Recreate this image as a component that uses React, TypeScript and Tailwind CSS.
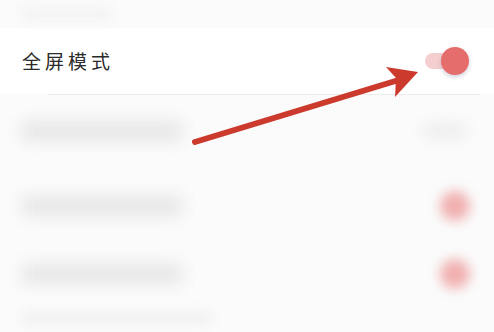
import React from "react";

function BlurRow({ pink, h }: { pink?: boolean; h: string }) {
  return (
    <div className={`flex items-center justify-between pl-[22px] pr-[24px] ${h}`}>
      <div className="h-[20px] w-[160px] rounded bg-[#e6e6e6] blur-[8px]" />
      {pink ? (
        <div className="h-[30px] w-[30px] rounded-full bg-[#f1b0b0] blur-[6px]" />
      ) : (
        <div className="mr-[4px] h-[16px] w-[42px] rounded bg-[#eeeeee] blur-[7px]" />
      )}
    </div>
  );
}

export default function App() {
  return (
    <div className="relative h-[332px] w-[494px] overflow-hidden bg-[#fbfbfb] font-['Noto_Sans_CJK_SC',sans-serif]">
      <div className="flex h-[28px] items-center pl-[22px]">
        <div className="h-[10px] w-[90px] rounded bg-[#f1f1f1] blur-[6px]" />
      </div>
      <div className="flex h-[66px] items-center justify-between bg-white pl-[22px] pr-[25px]">
        <span className="text-[19px] tracking-[4px] text-[#2a2a2a]">全屏模式</span>
        <div className="relative flex h-[30px] w-[44px] items-center">
          <div className="h-[16px] w-[34px] rounded-full bg-[#f5cfcf]" />
          <div className="absolute right-0 top-[1px] h-[28px] w-[28px] rounded-full bg-[#e56d6b] shadow-[0_2px_4px_rgba(120,120,160,0.35)]" />
        </div>
      </div>
      <div className="ml-[48px] mr-[14px] h-px bg-[#ececec]" />
      <div className="flex flex-col">
        <BlurRow h="h-[72px]" />
        <BlurRow h="h-[78px]" pink />
        <BlurRow h="h-[58px]" pink />
        <div className="flex h-[30px] items-center pl-[22px]">
          <div className="h-[12px] w-[190px] rounded bg-[#f0f0f0] blur-[6px]" />
        </div>
      </div>
      <svg className="absolute left-0 top-0" width="494" height="332" viewBox="0 0 494 332">
        <line x1="195" y1="142" x2="402" y2="79" stroke="#cc3a2e" strokeWidth="6" strokeLinecap="round" />
        <polygon points="418,72 386,67 396,78 395,97" fill="#cc3a2e" />
      </svg>
    </div>
  );
}
